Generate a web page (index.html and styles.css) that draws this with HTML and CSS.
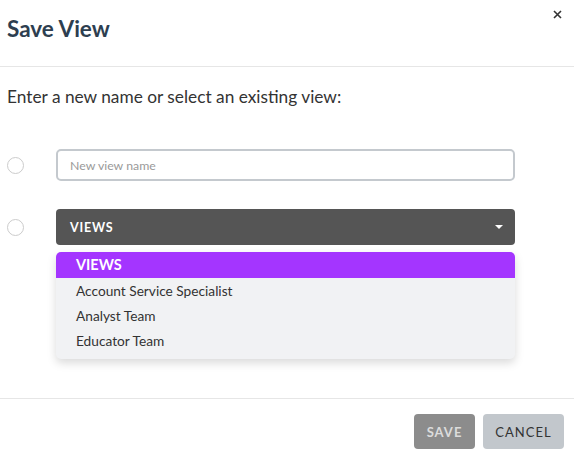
FILE: index.html
```html
<!DOCTYPE html>
<html lang="en">
<head>
    <meta charset="UTF-8">
    <title>Save View</title>
    <link rel="stylesheet" href="styles.css">
</head>
<body>
    <div class="modal">
        <div class="modal-header">
            <h2 class="modal-title">Save View</h2>
            <button class="close-btn" aria-label="Close">
                <svg width="9" height="9" viewBox="0 0 9 9"><path d="M1 1 L8 8 M8 1 L1 8" stroke="#333" stroke-width="1.6" fill="none"/></svg>
            </button>
        </div>

        <div class="modal-body">
            <p class="prompt">Enter a new name or select an existing view:</p>

            <div class="option-row row-input">
                <span class="radio"></span>
                <input class="name-input" type="text" placeholder="New view name">
            </div>

            <div class="option-row row-select">
                <span class="radio"></span>
                <div class="dropdown">
                    <button class="dropdown-toggle">
                        <span>VIEWS</span>
                        <span class="caret"></span>
                    </button>
                    <ul class="dropdown-menu">
                        <li class="menu-header">VIEWS</li>
                        <li>Account Service Specialist</li>
                        <li>Analyst Team</li>
                        <li>Educator Team</li>
                    </ul>
                </div>
            </div>
        </div>

        <div class="modal-footer">
            <button class="btn btn-save">SAVE</button>
            <button class="btn btn-cancel">CANCEL</button>
        </div>
    </div>
</body>
</html>
```

FILE: styles.css
```css
* {
    box-sizing: border-box;
}

body {
    margin: 0;
    background: white;
    font-family: 'Lato', 'Liberation Sans', sans-serif;
    color: #333;
}

.modal {
    position: relative;
    width: 574px;
    height: 457px;
    display: flex;
    flex-direction: column;
}

.modal-header {
    height: 67px;
    border-bottom: 1px solid #e6e6e6;
    padding: 14px 7px 0;
}

.modal-title {
    margin: 0;
    font-size: 22.5px;
    font-weight: 700;
    color: #2d3e50;
    line-height: 29px;
}

.close-btn {
    position: absolute;
    top: 7px;
    right: 9px;
    border: none;
    background: none;
    padding: 3px;
    cursor: pointer;
    line-height: 0;
}

.modal-body {
    flex: 1;
    padding: 0 0 0 7px;
}

.prompt {
    margin: 18px 0 0;
    font-size: 17.3px;
    line-height: 24px;
    color: #333;
}

.option-row {
    display: grid;
    grid-template-columns: 49px 459px;
    align-items: center;
}

.row-input {
    margin-top: 40px;
}

.row-select {
    margin-top: 28px;
}

.radio {
    width: 17px;
    height: 17px;
    border: 1px solid #ccc;
    border-radius: 50%;
    background: white;
}

.name-input {
    height: 32px;
    border: 2px solid #c4c9ce;
    border-radius: 5px;
    padding: 0 12px;
    font-family: inherit;
    font-size: 12.3px;
    color: #333;
    outline: none;
}

.name-input::placeholder {
    color: #9a9a9a;
}

.dropdown {
    position: relative;
}

.dropdown-toggle {
    width: 100%;
    height: 36px;
    display: flex;
    justify-content: space-between;
    align-items: center;
    padding: 0 12px 0 14px;
    background: #555;
    border: none;
    border-radius: 4px;
    color: white;
    font-family: inherit;
    font-size: 12.5px;
    font-weight: 700;
    letter-spacing: 0.8px;
}

.caret {
    width: 0;
    height: 0;
    border-left: 4px solid transparent;
    border-right: 4px solid transparent;
    border-top: 4px solid white;
}

.dropdown-menu {
    position: absolute;
    top: 43px;
    left: 0;
    right: 0;
    margin: 0;
    padding: 0 0 6px;
    list-style: none;
    background: #f1f2f4;
    border-radius: 5px;
    box-shadow: 0 4px 10px rgba(0,0,0,0.15);
    z-index: 10;
}

.dropdown-menu li {
    height: 25px;
    line-height: 25px;
    padding-left: 20px;
    font-size: 13.7px;
    color: #333;
}

.dropdown-menu .menu-header {
    height: 26px;
    line-height: 26px;
    background: #a435ff;
    color: white;
    font-size: 14.5px;
    font-weight: 700;
    border-radius: 5px 5px 0 0;
}

.modal-footer {
    height: 59px;
    border-top: 1px solid #e6e6e6;
    display: flex;
    justify-content: flex-end;
    align-items: flex-start;
    gap: 8px;
    padding: 15px 10px 0;
}

.btn {
    height: 35px;
    border: none;
    border-radius: 4px;
    font-family: inherit;
    font-size: 13px;
    letter-spacing: 1px;
    cursor: pointer;
}

.btn-save {
    width: 61px;
    background: #8c8c8c;
    color: #dcdcdc;
    font-weight: 700;
}

.btn-cancel {
    width: 81px;
    background: #c2c7cc;
    color: #333;
}
```
